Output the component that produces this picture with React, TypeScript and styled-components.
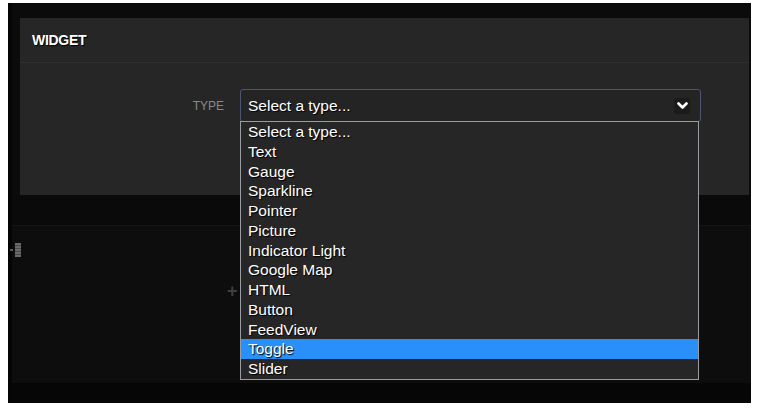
import React from "react";
import styled, { createGlobalStyle } from "styled-components";

const Global = createGlobalStyle`
  html, body { margin: 0; padding: 0; background: #ffffff; }
  body { font-family: "Liberation Sans", Arial, sans-serif; }
`;

const Frame = styled.div`
  width: 743px;
  height: 400px;
  margin: 3px 0 0 8px;
  background: #0b0b0b;
  display: flex;
  flex-direction: column;
  box-sizing: border-box;
  border-left: 4px solid #050505;
`;

const TopStrip = styled.div`
  height: 15px;
  flex: none;
`;

const Panel = styled.div`
  margin: 0 2px 0 8px;
  height: 177px;
  flex: none;
  background: #262626;
  display: flex;
  flex-direction: column;
`;

const Header = styled.div`
  height: 44px;
  flex: none;
  display: flex;
  align-items: center;
  padding-left: 12px;
  border-bottom: 1px solid #303030;
  color: #ffffff;
  font-family: "Liberation Sans", Arial, sans-serif;
  font-weight: 700;
  font-size: 14px;
  letter-spacing: -0.3px;
  text-shadow: 1px 1px 1px #000;
`;

const Body = styled.div`
  padding-top: 26px;
`;

const Row = styled.div`
  display: flex;
  align-items: center;
  gap: 16px;
`;

const Label = styled.div`
  width: 204px;
  text-align: right;
  color: #8a8a8a;
  font-family: "Liberation Sans", Arial, sans-serif;
  font-size: 12px;
`;

const SelectWrap = styled.div`
  position: relative;
  width: 461px;
`;

const SelectBox = styled.div`
  height: 33px;
  box-sizing: border-box;
  border: 1px solid #4b5670;
  border-radius: 3px;
  background: #242424;
  display: flex;
  align-items: center;
  justify-content: space-between;
  padding: 0 10px 0 7px;
  color: #ffffff;
  font-family: "Liberation Sans", Arial, sans-serif;
  font-size: 15.5px;
  text-shadow: 1px 1px 1px #000;
`;

const Chevron = styled.span`
  width: 16px;
  height: 16px;
  background: #1b1b1b;
  border-radius: 3px;
  display: flex;
  align-items: center;
  justify-content: center;
`;

const List = styled.ul`
  position: absolute;
  top: 32px;
  left: 0;
  width: 459px;
  margin: 0;
  padding: 0;
  list-style: none;
  background: #262626;
  border: 1px solid #9a9ca4;
  box-sizing: border-box;
  z-index: 5;
`;

const Item = styled.li<{ $active?: boolean }>`
  height: 19.75px;
  line-height: 19.75px;
  padding-left: 7px;
  color: #ffffff;
  font-family: "Liberation Sans", Arial, sans-serif;
  font-size: 15.5px;
  text-shadow: 1px 1px 1px #000;
  background: ${(p) => (p.$active ? "#2a90f9" : "transparent")};
`;

const Gap = styled.div`
  height: 30px;
  flex: none;
  border-bottom: 1px solid #151515;
  background: #0a0a0a;
`;

const Canvas = styled.div`
  flex: 1;
  position: relative;
  background: #0d0d0d;
`;

const BottomStrip = styled.div`
  height: 20px;
  flex: none;
  background: #060606;
`;

const Grip = styled.div`
  position: absolute;
  left: -2px;
  top: 17px;
  display: flex;
  align-items: center;
  gap: 2px;
`;

const GripDash = styled.span`
  width: 3px;
  height: 2px;
  background: #5a5a5a;
`;

const GripBar = styled.span`
  width: 6px;
  height: 14px;
  background: repeating-linear-gradient(#6a6a6a 0 2px, #4a4a4a 2px 3px);
`;

const Plus = styled.div`
  position: absolute;
  left: 215px;
  top: 56px;
  color: #3e3e3e;
  font-family: "Liberation Sans", Arial, sans-serif;
  font-size: 18px;
  font-weight: 700;
  line-height: 1;
`;

const items = [
  "Select a type...",
  "Text",
  "Gauge",
  "Sparkline",
  "Pointer",
  "Picture",
  "Indicator Light",
  "Google Map",
  "HTML",
  "Button",
  "FeedView",
  "Toggle",
  "Slider",
];

export default function App() {
  return (
    <>
      <Global />
      <Frame>
        <TopStrip />
        <Panel>
          <Header>WIDGET</Header>
          <Body>
            <Row>
              <Label>TYPE</Label>
              <SelectWrap>
                <SelectBox>
                  <span>Select a type...</span>
                  <Chevron>
                    <svg width="11" height="8" viewBox="0 0 11 8">
                      <path d="M1.5 1.5 L5.5 5.5 L9.5 1.5" fill="none" stroke="#ffffff" strokeWidth="2.6" strokeLinecap="round" strokeLinejoin="round" />
                    </svg>
                  </Chevron>
                </SelectBox>
                <List>
                  {items.map((it) => (
                    <Item key={it} $active={it === "Toggle"}>
                      {it}
                    </Item>
                  ))}
                </List>
              </SelectWrap>
            </Row>
          </Body>
        </Panel>
        <Gap />
        <Canvas>
          <Grip>
            <GripDash />
            <GripBar />
          </Grip>
          <Plus>+</Plus>
        </Canvas>
        <BottomStrip />
      </Frame>
    </>
  );
}
